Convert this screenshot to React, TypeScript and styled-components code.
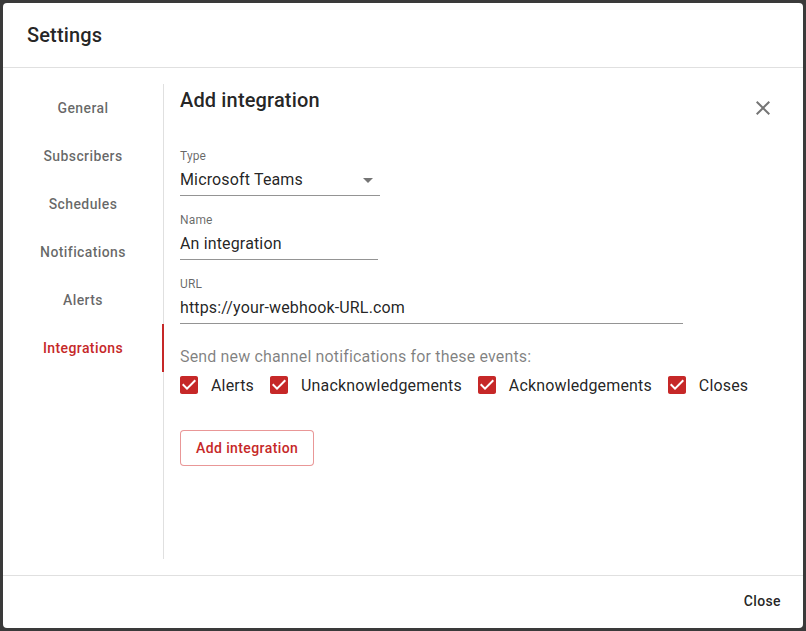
import React from 'react';
import styled, { createGlobalStyle } from 'styled-components';

const GlobalStyle = createGlobalStyle`
  html, body {
    margin: 0;
    padding: 0;
    background: #3a3a3a;
    font-family: Roboto, "Noto Sans", "Liberation Sans", sans-serif;
    color: rgba(0, 0, 0, 0.87);
  }
`;

const red = '#c62828';

const Page = styled.div`
  width: 806px;
  height: 631px;
  padding: 3px 3px 0 3px;
  box-sizing: border-box;
`;

const Dialog = styled.div`
  width: 800px;
  height: 625px;
  background: #fff;
  border-radius: 4px;
  display: flex;
  flex-direction: column;
  overflow: hidden;
`;

const Header = styled.div`
  height: 64px;
  padding: 0 24px;
  display: flex;
  align-items: center;
  font-size: 20px;
  font-weight: 500;
  letter-spacing: 0.15px;
  border-bottom: 1px solid #e0e0e0;
  flex-shrink: 0;
`;

const Body = styled.div`
  flex: 1;
  display: flex;
  padding: 16px 16px 16px 0;
  min-height: 0;
`;

const Nav = styled.nav`
  width: 160px;
  border-right: 1px solid #e0e0e0;
  display: flex;
  flex-direction: column;
  flex-shrink: 0;
`;

const NavItem = styled.div<{ $active?: boolean }>`
  height: 48px;
  display: flex;
  align-items: center;
  justify-content: center;
  font-size: 14px;
  font-weight: 500;
  letter-spacing: 0.4px;
  color: ${(p) => (p.$active ? red : 'rgba(0, 0, 0, 0.6)')};
  position: relative;

  &::after {
    content: '';
    display: ${(p) => (p.$active ? 'block' : 'none')};
    position: absolute;
    right: -1px;
    top: 0;
    bottom: 0;
    width: 2px;
    background: ${red};
  }
`;

const Content = styled.div`
  flex: 1;
  padding-left: 16px;
  display: flex;
  flex-direction: column;
`;

const TitleRow = styled.div`
  height: 48px;
  display: flex;
  justify-content: space-between;
  align-items: flex-start;
`;

const Heading = styled.h2`
  margin: 0;
  font-size: 20px;
  font-weight: 500;
  line-height: 32px;
  letter-spacing: 0.15px;
`;

const IconButton = styled.button`
  width: 48px;
  height: 48px;
  border: none;
  background: none;
  padding: 12px;
  margin: 0;
  display: flex;
  align-items: center;
  justify-content: center;
  color: rgba(0, 0, 0, 0.54);
`;

const Fields = styled.div`
  display: flex;
  flex-direction: column;
  gap: 16px;
  margin-top: 16px;
`;

const Field = styled.div<{ $width: number }>`
  width: ${(p) => p.$width}px;
  display: flex;
  flex-direction: column;
`;

const Label = styled.label`
  font-size: 12px;
  line-height: 16px;
  letter-spacing: 0.15px;
  color: rgba(0, 0, 0, 0.6);
`;

const Value = styled.div`
  font-size: 16px;
  line-height: 24px;
  letter-spacing: 0.15px;
  padding: 4px 0 3px;
  border-bottom: 1px solid rgba(0, 0, 0, 0.42);
  display: flex;
  justify-content: space-between;
  align-items: center;
  color: rgba(0, 0, 0, 0.87);
`;

const Arrow = styled.svg`
  width: 24px;
  height: 24px;
  fill: rgba(0, 0, 0, 0.54);
`;

const Events = styled.div`
  margin-top: 21px;
  font-size: 16px;
  line-height: 24px;
  letter-spacing: 0.15px;
  color: rgba(0, 0, 0, 0.5);
`;

const CheckRow = styled.div`
  display: flex;
  align-items: center;
  height: 32px;
`;

const CheckItem = styled.label`
  display: flex;
  align-items: center;
  margin-left: -3px;
  margin-right: 4px;
  font-size: 16px;
  letter-spacing: 0.15px;
  color: rgba(0, 0, 0, 0.87);

  & + & {
    margin-left: 9px;
  }

  svg {
    width: 24px;
    height: 24px;
    fill: ${red};
    margin-right: 10px;
  }
`;

const OutlineButton = styled.button`
  margin-top: 29px;
  align-self: flex-start;
  height: 36px;
  padding: 0 15px;
  border: 1px solid rgba(211, 47, 47, 0.5);
  border-radius: 4px;
  background: #fff;
  color: ${red};
  font-family: inherit;
  font-size: 14px;
  font-weight: 500;
  letter-spacing: 0.4px;
`;

const Footer = styled.div`
  height: 53px;
  border-top: 1px solid #e0e0e0;
  display: flex;
  align-items: center;
  justify-content: flex-end;
  padding: 0 14px 3px;
  box-sizing: border-box;
  flex-shrink: 0;
`;

const TextButton = styled.button`
  border: none;
  background: none;
  padding: 6px 8px;
  font-family: inherit;
  font-size: 14px;
  font-weight: 500;
  letter-spacing: 0.4px;
  color: rgba(0, 0, 0, 0.87);
`;

const navItems = ['General', 'Subscribers', 'Schedules', 'Notifications', 'Alerts', 'Integrations'];
const events = ['Alerts', 'Unacknowledgements', 'Acknowledgements', 'Closes'];

const CheckIcon = () => (
  <svg viewBox="0 0 24 24">
    <path d="M19 3H5c-1.11 0-2 .9-2 2v14c0 1.1.89 2 2 2h14c1.11 0 2-.9 2-2V5c0-1.1-.89-2-2-2zm-9 14l-5-5 1.41-1.41L10 14.17l7.59-7.59L19 8l-9 9z" />
  </svg>
);

const App = () => {
  return (
    <Page>
      <GlobalStyle />
      <Dialog>
        <Header>Settings</Header>
        <Body>
          <Nav>
            {navItems.map((item) => (
              <NavItem key={item} $active={item === 'Integrations'}>
                {item}
              </NavItem>
            ))}
          </Nav>
          <Content>
            <TitleRow>
              <Heading>Add integration</Heading>
              <IconButton>
                <svg width="24" height="24" viewBox="0 0 24 24" fill="currentColor">
                  <path d="M19 6.41 17.59 5 12 10.59 6.41 5 5 6.41 10.59 12 5 17.59 6.41 19 12 13.41 17.59 19 19 17.59 13.41 12z" />
                </svg>
              </IconButton>
            </TitleRow>
            <Fields>
              <Field $width={200}>
                <Label>Type</Label>
                <Value>
                  Microsoft Teams
                  <Arrow viewBox="0 0 24 24">
                    <path d="M7 10l5 5 5-5z" />
                  </Arrow>
                </Value>
              </Field>
              <Field $width={198}>
                <Label>Name</Label>
                <Value>An integration</Value>
              </Field>
              <Field $width={503}>
                <Label>URL</Label>
                <Value>https://your-webhook-URL.com</Value>
              </Field>
            </Fields>
            <Events>Send new channel notifications for these events:</Events>
            <CheckRow>
              {events.map((ev) => (
                <CheckItem key={ev}>
                  <CheckIcon />
                  {ev}
                </CheckItem>
              ))}
            </CheckRow>
            <OutlineButton>Add integration</OutlineButton>
          </Content>
        </Body>
        <Footer>
          <TextButton>Close</TextButton>
        </Footer>
      </Dialog>
    </Page>
  );
};

export default App;
